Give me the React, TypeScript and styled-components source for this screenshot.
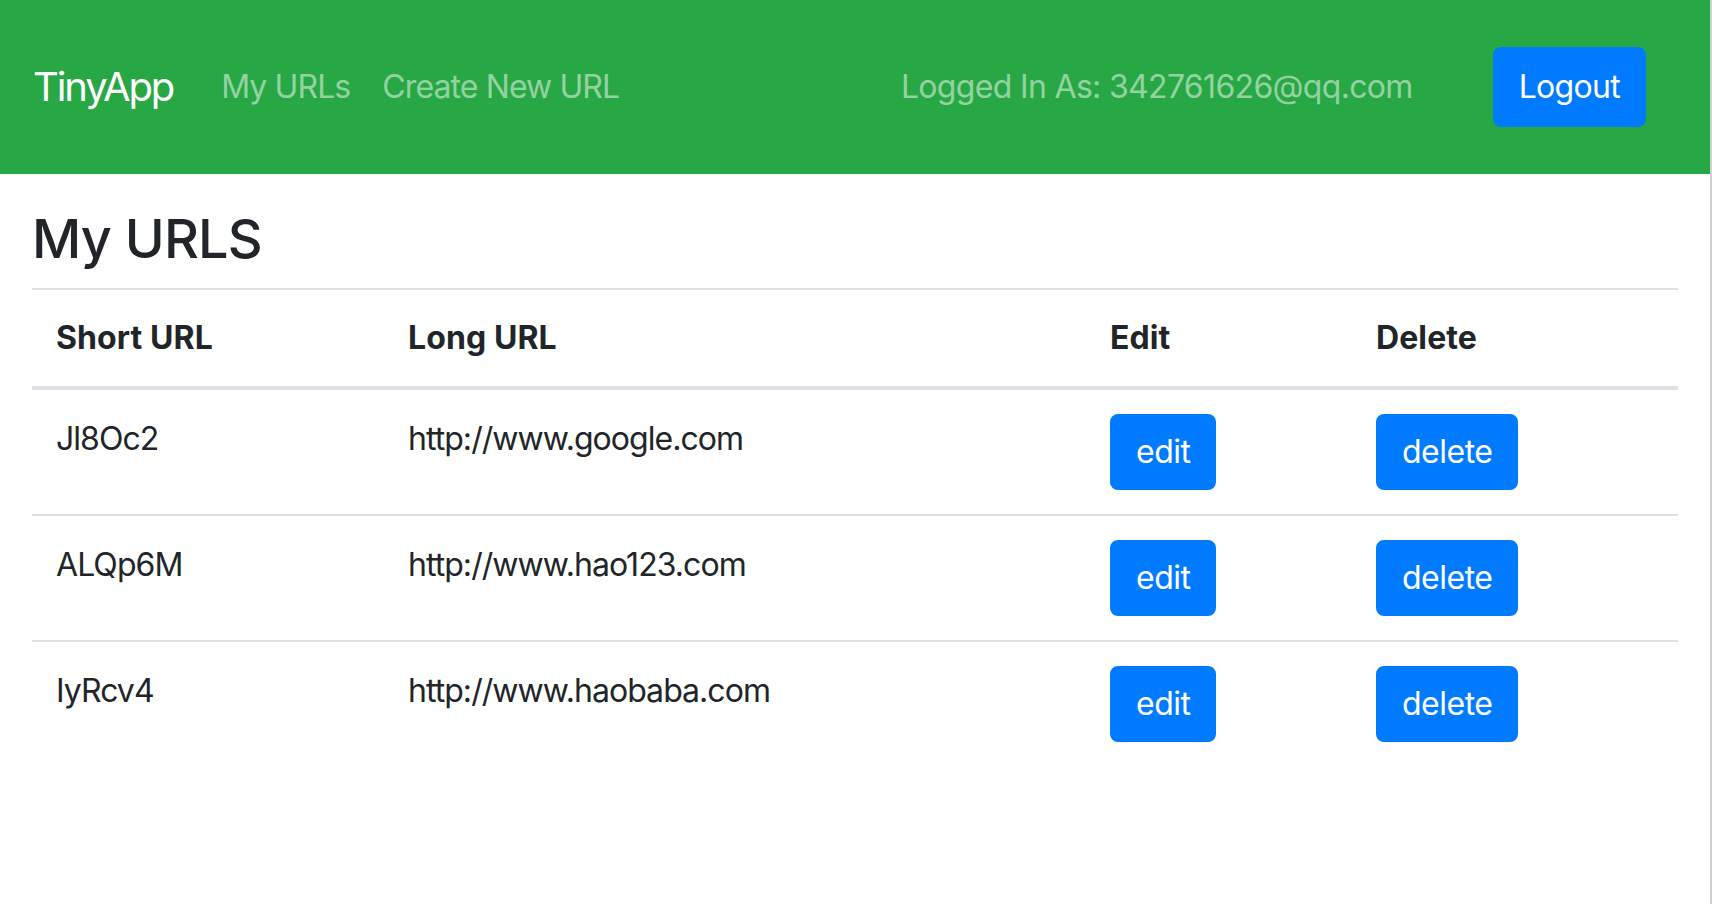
import React from "react";
import styled, { createGlobalStyle } from "styled-components";

const GlobalStyle = createGlobalStyle`
  html, body {
    margin: 0;
    padding: 0;
    background: #ffffff;
  }
  body {
    font-family: "Inter", "Noto Sans", "Liberation Sans", sans-serif;
    color: #212529;
  }
  * { box-sizing: border-box; }
`;

const Page = styled.div`
  width: 1712px;
  min-height: 904px;
  border-right: 2px solid #cfd1d4;
  display: flex;
  flex-direction: column;
`;

const NavBar = styled.nav`
  height: 174px;
  background: #28a745;
  display: flex;
  align-items: center;
  padding: 0 64px 0 33px;
`;

const Brand = styled.a`
  font-size: 40px;
  line-height: 60px;
  color: #ffffff;
  text-decoration: none;
  margin-right: 32px;
  letter-spacing: -2.1px;
`;

const NavLink = styled.a`
  font-size: 32px;
  line-height: 48px;
  padding: 0 16px;
  color: rgba(255, 255, 255, 0.5);
  text-decoration: none;
  letter-spacing: -0.9px;
`;

const Spacer = styled.div`
  flex: 1;
`;

const LoggedIn = styled.span`
  font-size: 32px;
  line-height: 48px;
  color: rgba(255, 255, 255, 0.5);
  margin-right: 80px;
  letter-spacing: -0.67px;
`;

const Button = styled.button<{ $large?: boolean }>`
  font-family: inherit;
  font-size: 32px;
  line-height: 48px;
  color: #ffffff;
  background: #007bff;
  border: 2px solid #007bff;
  border-radius: 8px;
  padding: ${(p) => (p.$large ? "14px 24px" : "12px 24px")};
  cursor: pointer;
  letter-spacing: ${(p) => (p.$large ? "-0.7px" : "-0.5px")};
`;

const Main = styled.main`
  padding: 33px 32px 0 32px;
`;

const Heading = styled.h3`
  margin: 0 0 16px 0;
  font-size: 54px;
  font-weight: 500;
  line-height: 1.2;
  color: #212529;
  letter-spacing: -0.8px;
`;

const Table = styled.table`
  width: 100%;
  border-collapse: collapse;
  table-layout: fixed;
`;

const HeadCell = styled.th<{ $w: number }>`
  width: ${(p) => p.$w}px;
  text-align: left;
  vertical-align: bottom;
  font-size: 32px;
  line-height: 48px;
  font-weight: 700;
  padding: 24px;
  border-top: 2px solid #dee2e6;
  border-bottom: 4px solid #dee2e6;
  letter-spacing: 0.1px;
`;

const Cell = styled.td`
  vertical-align: top;
  font-size: 32px;
  line-height: 48px;
  padding: 25px 24px 23px 24px;
  border-top: 2px solid #dee2e6;
  letter-spacing: -0.95px;
`;

const ButtonCell = styled.td`
  vertical-align: top;
  padding: 24px;
  border-top: 2px solid #dee2e6;
`;

const urls = [
  { short: "Jl8Oc2", long: "http://www.google.com" },
  { short: "ALQp6M", long: "http://www.hao123.com" },
  { short: "IyRcv4", long: "http://www.haobaba.com" },
];

export default function App() {
  return (
    <Page>
      <GlobalStyle />
      <NavBar>
        <Brand href="#">TinyApp</Brand>
        <NavLink href="#">My URLs</NavLink>
        <NavLink href="#">Create New URL</NavLink>
        <Spacer />
        <LoggedIn>Logged In As: 342761626@qq.com</LoggedIn>
        <Button $large>Logout</Button>
      </NavBar>
      <Main>
        <Heading>My URLS</Heading>
        <Table>
          <thead>
            <tr>
              <HeadCell $w={352}>Short URL</HeadCell>
              <HeadCell $w={702}>Long URL</HeadCell>
              <HeadCell $w={266}>Edit</HeadCell>
              <HeadCell $w={326}>Delete</HeadCell>
            </tr>
          </thead>
          <tbody>
            {urls.map((u) => (
              <tr key={u.short}>
                <Cell>{u.short}</Cell>
                <Cell>{u.long}</Cell>
                <ButtonCell>
                  <Button>edit</Button>
                </ButtonCell>
                <ButtonCell>
                  <Button>delete</Button>
                </ButtonCell>
              </tr>
            ))}
          </tbody>
        </Table>
      </Main>
    </Page>
  );
}
